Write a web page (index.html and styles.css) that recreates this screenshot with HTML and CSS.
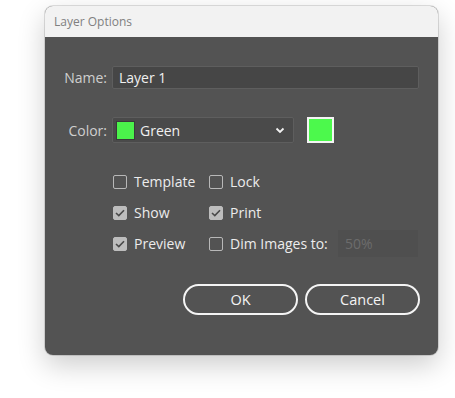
FILE: index.html
```html
<!DOCTYPE html>
<html>
<head>
<meta charset="utf-8">
<link rel="stylesheet" href="styles.css">
</head>
<body>
<div class="dialog">
  <div class="titlebar">Layer Options</div>
  <div class="content">
    <div class="row name-row">
      <span class="label">Name:</span>
      <div class="text-input">Layer 1</div>
    </div>
    <div class="row color-row">
      <span class="label">Color:</span>
      <div class="select">
        <span class="chip"></span>
        <span class="select-text">Green</span>
        <svg class="chev" width="10" height="7" viewBox="0 0 10 7"><path d="M1.5 1.5 L5 5 L8.5 1.5" fill="none" stroke="#f2f2f2" stroke-width="1.8"/></svg>
      </div>
      <div class="swatch"></div>
    </div>
    <div class="checks">
      <label class="check"><span class="box"></span>Template</label>
      <label class="check"><span class="box"></span>Lock</label>
      <label class="check"><span class="box on"><svg width="10" height="8" viewBox="0 0 10 8"><path d="M1 4 L3.8 6.6 L9 1.2" fill="none" stroke="#4a4a4a" stroke-width="1.6"/></svg></span>Show</label>
      <label class="check"><span class="box on"><svg width="10" height="8" viewBox="0 0 10 8"><path d="M1 4 L3.8 6.6 L9 1.2" fill="none" stroke="#4a4a4a" stroke-width="1.6"/></svg></span>Print</label>
      <label class="check"><span class="box on"><svg width="10" height="8" viewBox="0 0 10 8"><path d="M1 4 L3.8 6.6 L9 1.2" fill="none" stroke="#4a4a4a" stroke-width="1.6"/></svg></span>Preview</label>
      <label class="check dim"><span class="box"></span>Dim Images to:<span class="pct">50%</span></label>
    </div>
    <div class="buttons">
      <button class="btn">OK</button>
      <button class="btn">Cancel</button>
    </div>
  </div>
</div>
</body>
</html>
```
FILE: styles.css
```css
html, body {
  margin: 0;
  padding: 0;
  background: #ffffff;
}
body {
  width: 455px;
  height: 398px;
  font-family: "Open Sans", "Noto Sans", sans-serif;
  overflow: hidden;
}
.dialog {
  margin: 6px 0 0 45px;
  width: 393px;
  height: 349px;
  border-radius: 8px;
  overflow: hidden;
  background: #535353;
  box-shadow: 0 10px 28px rgba(0,0,0,0.2), 0 0 0 1px rgba(0,0,0,0.12);
  display: flex;
  flex-direction: column;
}
.titlebar {
  height: 31px;
  background: #f2f2f2;
  color: #808080;
  font-size: 12px;
  line-height: 31px;
  padding-left: 9px;
  box-sizing: border-box;
  flex: none;
}
.content {
  flex: 1;
  padding: 29px 19px 0 0;
  color: #f0f0f0;
  font-size: 14px;
}
.row {
  display: flex;
  align-items: center;
}
.label {
  width: 62px;
  text-align: right;
  margin-right: 5px;
  color: #cfcfcf;
  flex: none;
}
.text-input {
  flex: 1;
  height: 23px;
  box-sizing: border-box;
  background: #464646;
  border: 1px solid #5e5e5e;
  border-radius: 2px;
  padding-left: 6px;
  line-height: 21px;
}
.color-row {
  margin-top: 28px;
}
.select {
  width: 182px;
  height: 26px;
  box-sizing: border-box;
  background: #4a4a4a;
  border: 1px solid #5e5e5e;
  border-radius: 2px;
  display: flex;
  align-items: center;
  padding-left: 3px;
}
.chip {
  width: 19px;
  height: 19px;
  background: #4bf24b;
  border: 1px solid #3a3a3a;
  box-sizing: border-box;
}
.select-text {
  margin-left: 5px;
  flex: 1;
}
.chev {
  margin-right: 8px;
}
.swatch {
  margin-left: 13px;
  width: 27px;
  height: 26px;
  box-sizing: border-box;
  background: #4cf94c;
  border: 2px solid #f4f4f4;
}
.checks {
  margin-top: 23px;
  margin-left: 68px;
  margin-right: 1px;
  display: grid;
  grid-template-columns: 96px 1fr;
  grid-auto-rows: 31px;
}
.check {
  display: flex;
  align-items: center;
  color: #ececec;
}
.box {
  width: 14px;
  height: 14px;
  box-sizing: border-box;
  border: 1px solid #b8b8b8;
  border-radius: 2px;
  margin-right: 7px;
  display: flex;
  align-items: center;
  justify-content: center;
  flex: none;
}
.box.on {
  background: #bdbdbd;
  border-color: #bdbdbd;
}
.pct {
  margin-left: auto;
  width: 80px;
  height: 27px;
  box-sizing: border-box;
  background: #4f4f4f;
  color: #6c6c6c;
  padding-left: 7px;
  line-height: 27px;
}
.buttons {
  display: flex;
  justify-content: flex-end;
  gap: 7px;
  margin-top: 25px;
  margin-right: -1px;
}
.btn {
  width: 115px;
  height: 31px;
  border: 2px solid #f4f4f4;
  border-radius: 16px;
  background: transparent;
  color: #f4f4f4;
  font-family: "Open Sans", "Noto Sans", sans-serif;
  font-size: 14.5px;
}
```
